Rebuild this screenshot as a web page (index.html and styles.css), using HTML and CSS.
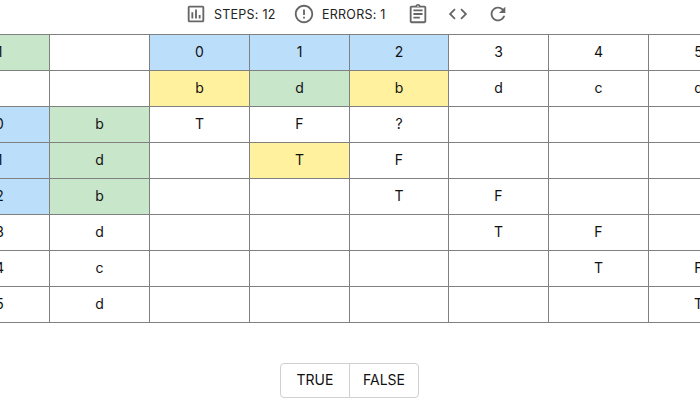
FILE: index.html
```
<!DOCTYPE html>
<html lang="en">
<head>
<meta charset="utf-8">
<title>Table filling</title>
<link rel="stylesheet" href="styles.css">
</head>
<body>
<header class="toolbar">
  <div class="stat"><svg class="icon" viewBox="0 0 24 24"><path d="M9 17H7v-7h2v7zm4 0h-2V7h2v10zm4 0h-2v-4h2v4zm2 2H5V5h14v14zm0-16H5c-1.100 0-2 .9-2 2v14c0 1.100.9 2 2 2h14c1.100 0 2-.9 2-2V5c0-1.100-.9-2-2-2z"/></svg><span class="label">STEPS: 12</span></div>
  <div class="stat errors"><svg class="icon" viewBox="0 0 24 24"><path d="M11 15h2v2h-2zm0-8h2v6h-2zm.99-5C6.470 2 2 6.480 2 12s4.470 10 9.990 10C17.520 22 22 17.520 22 12S17.520 2 11.990 2zM12 20c-4.420 0-8-3.580-8-8s3.580-8 8-8 8 3.580 8 8-3.580 8-8 8z"/></svg><span class="label">ERRORS: 1</span></div>
  <svg class="icon action" viewBox="0 0 24 24"><path d="M7 15h7v2H7zm0-4h10v2H7zm0-4h10v2H7zm12-4h-4.180C14.400 1.840 13.300 1 12 1s-2.400.84-2.820 2H5c-1.100 0-2 .9-2 2v15c0 1.100.9 2 2 2h14c1.100 0 2-.9 2-2V5c0-1.100-.9-2-2-2zm-7-.25c.41 0 .75.34.75.75s-.34.75-.75.75-.75-.34-.75-.75.34-.75.75-.75zM19 20H5V5h14v15z"/></svg>
  <svg class="icon action" viewBox="0 0 24 24"><path d="M9.400 16.600 4.800 12l4.600-4.600L8 6l-6 6 6 6 1.400-1.400zm5.200 0 4.600-4.600-4.600-4.600L16 6l6 6-6 6-1.400-1.400z"/></svg>
  <svg class="icon action" viewBox="0 0 24 24"><path d="M17.650 6.350C16.200 4.900 14.210 4 12 4c-4.420 0-7.990 3.580-7.990 8s3.570 8 7.990 8c3.730 0 6.840-2.550 7.730-6h-2.080c-.82 2.330-3.040 4-5.650 4-3.310 0-6-2.690-6-6s2.690-6 6-6c1.660 0 3.140.69 4.220 1.780L13 11h7V4l-2.350 2.350z"/></svg>
</header>
<main class="viewport">
<div class="grid">
  <div class="cell green">1</div><div class="cell"></div><div class="cell blue">0</div><div class="cell blue">1</div><div class="cell blue">2</div><div class="cell">3</div><div class="cell">4</div><div class="cell">5</div>
  <div class="cell"></div><div class="cell"></div><div class="cell yellow">b</div><div class="cell green">d</div><div class="cell yellow">b</div><div class="cell">d</div><div class="cell">c</div><div class="cell">d</div>
  <div class="cell blue">0</div><div class="cell green">b</div><div class="cell">T</div><div class="cell">F</div><div class="cell">?</div><div class="cell"></div><div class="cell"></div><div class="cell"></div>
  <div class="cell blue">1</div><div class="cell green">d</div><div class="cell"></div><div class="cell yellow">T</div><div class="cell">F</div><div class="cell"></div><div class="cell"></div><div class="cell"></div>
  <div class="cell blue">2</div><div class="cell green">b</div><div class="cell"></div><div class="cell"></div><div class="cell">T</div><div class="cell">F</div><div class="cell"></div><div class="cell"></div>
  <div class="cell">3</div><div class="cell">d</div><div class="cell"></div><div class="cell"></div><div class="cell"></div><div class="cell">T</div><div class="cell">F</div><div class="cell"></div>
  <div class="cell">4</div><div class="cell">c</div><div class="cell"></div><div class="cell"></div><div class="cell"></div><div class="cell"></div><div class="cell">T</div><div class="cell">F</div>
  <div class="cell">5</div><div class="cell">d</div><div class="cell"></div><div class="cell"></div><div class="cell"></div><div class="cell"></div><div class="cell"></div><div class="cell">T</div>
</div>
</main>
<div class="answers"><button class="answer">TRUE</button><button class="answer">FALSE</button></div>
</body>
</html>
```
FILE: styles.css
```
* { box-sizing: border-box; }
body {
  margin: 0;
  height: 400px;
  overflow: hidden;
  background: #fff;
  color: #111;
  font-family: "Inter", sans-serif;
  font-size: 14px;
}
.toolbar {
  display: flex;
  align-items: center;
  height: 34px;
  padding: 0 0 6px 185px;
}
.stat { display: flex; align-items: center; width: 108px; }
.stat.errors { width: 114px; }
.icon { width: 22px; height: 22px; flex: none; fill: #666; }
.label {
  margin-left: 7px;
  font-size: 12.5px;
  letter-spacing: 0.25px;
  white-space: nowrap;
  color: #222;
}
.action { margin-right: 18px; }
.viewport { overflow: hidden; }
.grid {
  display: grid;
  grid-template-columns: 100px 100px 100px 100px 99px 100px 100px 100px;
  grid-auto-rows: 36px;
  width: 800px;
  margin-left: -50px;
  border-top: 1px solid #808080;
}
.cell {
  display: flex;
  align-items: center;
  justify-content: center;
  padding-bottom: 2px;
  border-right: 1px solid #808080;
  border-bottom: 1px solid #808080;
}
.blue { background: #bbdefb; }
.green { background: #c8e6c9; }
.yellow { background: #fff19d; }
.answers { display: flex; width: 139px; height: 35px; margin: 40px 0 0 280px; }
.answer {
  width: 70px;
  padding: 0 0 2px;
  border: 1px solid #d0d0d0;
  border-radius: 4px 0 0 4px;
  background: #fff;
  color: #111;
  font: inherit;
}
.answer + .answer { margin-left: -1px; border-radius: 0 4px 4px 0; }
```
